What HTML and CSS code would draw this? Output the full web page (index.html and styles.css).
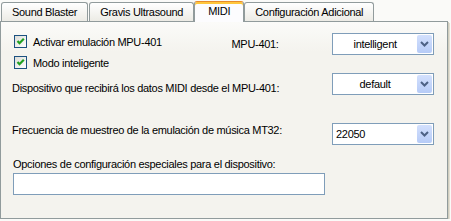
FILE: index.html
```html
<!DOCTYPE html>
<html lang="es">
<head>
    <meta charset="UTF-8">
    <title>MIDI</title>
    <link rel="stylesheet" href="styles.css">
</head>
<body>
    <div class="tabs">
        <div class="tab">Sound Blaster</div>
        <div class="tab">Gravis Ultrasound</div>
        <div class="tab active">MIDI</div>
        <div class="tab">Configuración Adicional</div>
    </div>

    <div class="panel">
        <!-- MPU-401 -->
        <div class="row row-top">
            <div class="checks">
                <div class="check">
                    <span class="box"><svg width="11" height="11" viewBox="0 0 11 11"><path d="M2.5 5 L4.5 7.2 L8.8 2.8" fill="none" stroke="#21a121" stroke-width="2.2"/></svg></span>
                    Activar emulación MPU-401
                </div>
                <div class="check">
                    <span class="box"><svg width="11" height="11" viewBox="0 0 11 11"><path d="M2.5 5 L4.5 7.2 L8.8 2.8" fill="none" stroke="#21a121" stroke-width="2.2"/></svg></span>
                    Modo inteligente
                </div>
            </div>
            <div class="mpu-label">MPU-401:</div>
            <div class="combo">
                <span class="combo-text">intelligent</span>
                <span class="arrow"><svg width="9" height="6" viewBox="0 0 9 6"><path d="M1 1 L4.5 4.5 L8 1" fill="none" stroke="#4d6185" stroke-width="2"/></svg></span>
            </div>
        </div>

        <div class="row row-dev">
            <div class="label">Dispositivo que recibirá los datos MIDI desde el MPU-401:</div>
            <div class="combo">
                <span class="combo-text">default</span>
                <span class="arrow"><svg width="9" height="6" viewBox="0 0 9 6"><path d="M1 1 L4.5 4.5 L8 1" fill="none" stroke="#4d6185" stroke-width="2"/></svg></span>
            </div>
        </div>

        <div class="row row-freq">
            <div class="label">Frecuencia de muestreo de la emulación de música MT32:</div>
            <div class="combo">
                <span class="combo-text left">22050</span>
                <span class="arrow"><svg width="9" height="6" viewBox="0 0 9 6"><path d="M1 1 L4.5 4.5 L8 1" fill="none" stroke="#4d6185" stroke-width="2"/></svg></span>
            </div>
        </div>

        <div class="options">
            <div class="label">Opciones de configuración especiales para el dispositivo:</div>
            <div class="textbox"></div>
        </div>
    </div>
</body>
</html>
```

FILE: styles.css
```css
body {
    margin: 0;
    background-color: #fafaf8;
    font-family: "Liberation Sans", Arial, sans-serif;
    font-size: 11px;
    letter-spacing: -0.3px;
    color: #000;
}

/* Reiter */
.tabs {
    display: flex;
    align-items: flex-end;
    height: 21px;
    padding-left: 1px;
}

.tab {
    height: 18px;
    line-height: 18px;
    padding: 0 10px;
    margin-right: 1px;
    border: 1px solid #919b9c;
    border-bottom: none;
    border-radius: 3px 3px 0 0;
    background: linear-gradient(#ffffff, #ecebe5);
    white-space: nowrap;
}

.tab.active {
    position: relative;
    z-index: 1;
    height: 20px;
    line-height: 18px;
    padding: 0 13px;
    margin: 0 0 -1px -1px;
    border-top: 1px solid #e68b2c;
    box-shadow: inset 0 2px 0 #ffc73c;
    background: #fcfcfe;
}

/* Inhalt */
.panel {
    height: 196px;
    width: 422px;
    padding: 0 13px 0 11px;
    border: 1px solid #919b9c;
    background: linear-gradient(#fbfbf9, #f4f3ee 30px);
    box-shadow: 1px 1px 0 #d0cdbe, 2px 2px 0 #e3e0d4;
}

.row {
    display: flex;
    align-items: flex-start;
}

.row-top {
    padding-top: 9px;
}

.checks {
    width: 220px;
}

.check {
    display: flex;
    align-items: center;
    height: 21px;
    padding-left: 2px;
}

.box {
    display: flex;
    align-items: center;
    justify-content: center;
    width: 11px;
    height: 11px;
    margin-right: 6px;
    border: 1px solid #1c5180;
    background: linear-gradient(135deg, #dcdcd7, #ffffff);
}

.mpu-label {
    width: 101px;
    margin-top: 2px;
    line-height: 22px;
}

.label {
    flex: 1;
    line-height: 14px;
}

.row-dev .label {
    margin-top: 8px;
}

.row-freq {
    margin-top: 28px;
}

.combo {
    display: flex;
    align-items: center;
    width: 100px;
    height: 20px;
    border: 1px solid #7f9db9;
    background: #fff;
}

.row-top .combo {
    margin-top: 2px;
}

.combo-text {
    flex: 1;
    text-align: center;
}

.combo-text.left {
    text-align: left;
    padding-left: 3px;
}

.arrow {
    display: flex;
    align-items: center;
    justify-content: center;
    width: 15px;
    height: 18px;
    margin-right: 1px;
    border-radius: 2px;
    background: linear-gradient(#d3e0fd, #b6cbf7);
}

.options {
    margin-top: 12px;
}

.options .label {
    padding-left: 1px;
}

.textbox {
    width: 310px;
    height: 20px;
    margin: 2px 0 0 1px;
    border: 1px solid #7f9db9;
    background: #fff;
}
```
